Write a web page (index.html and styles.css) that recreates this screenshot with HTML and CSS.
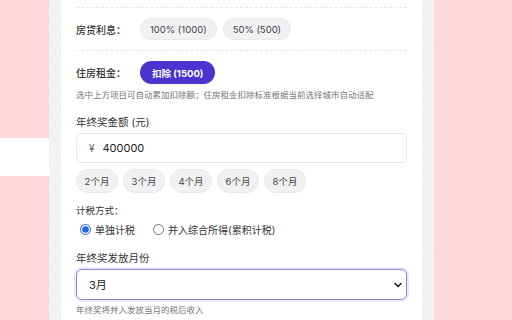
FILE: index.html
```html
<!DOCTYPE html>
<html lang="zh-CN">
<head>
  <meta charset="UTF-8">
  <meta name="viewport" content="width=device-width, initial-scale=1.0">
  <title>年终奖计算器</title>
  <link rel="stylesheet" href="styles.css">
</head>
<body>
  <div class="side">
    <div class="side-block"></div>
  </div>
  <div class="panel">
    <div class="card">
      <div class="deduct-row">
        <span class="row-label">房贷利息：</span>
        <div class="chips">
          <button class="chip">100% (1000)</button>
          <button class="chip">50% (500)</button>
        </div>
      </div>
      <div class="deduct-row">
        <span class="row-label">住房租金：</span>
        <div class="chips">
          <button class="chip active">扣除 (1500)</button>
        </div>
      </div>
      <p class="hint">选中上方项目可自动累加扣除额；住房租金扣除标准根据当前选择城市自动适配</p>

      <div class="field bonus-field">
        <label class="field-label" for="bonus">年终奖金额 (元)</label>
        <div class="money-input">
          <span class="currency">¥</span>
          <input type="text" id="bonus" value="400000">
        </div>
        <div class="chips months">
          <button class="chip">2个月</button>
          <button class="chip">3个月</button>
          <button class="chip">4个月</button>
          <button class="chip">6个月</button>
          <button class="chip">8个月</button>
        </div>
      </div>

      <div class="field">
        <span class="small-label">计税方式：</span>
        <div class="radios">
          <label class="radio"><input type="radio" name="mode" checked> 单独计税</label>
          <label class="radio"><input type="radio" name="mode"> 并入综合所得(累积计税)</label>
        </div>
      </div>

      <div class="field month-field">
        <label class="field-label" for="month">年终奖发放月份</label>
        <div class="select-wrap">
          <select id="month">
            <option>1月</option>
            <option>2月</option>
            <option selected>3月</option>
            <option>4月</option>
          </select>
          <svg class="chevron" width="10" height="10" viewBox="0 0 10 10"><path d="M2 3.5 L5 6.5 L8 3.5" fill="none" stroke="#222" stroke-width="1.6" stroke-linecap="round" stroke-linejoin="round"/></svg>
        </div>
        <p class="hint">年终奖将并入发放当月的税后收入</p>
      </div>
    </div>
  </div>
</body>
</html>
```

FILE: styles.css
```css
/* 年终奖计算页面 */
* {
  box-sizing: border-box;
}

html, body {
  height: 100%;
}

body {
  margin: 0;
  display: flex;
  overflow: hidden;
  background-color: #fdd9de;
  background-image: radial-gradient(#f9cdd4 0.6px, transparent 0.6px);
  background-size: 4px 4px;
  font-family: "Inter", "Noto Sans CJK SC", sans-serif;
  color: #2b2b2b;
}

.side {
  width: 49px;
  padding-top: 138px;
}

.side-block {
  height: 38px;
  background-color: #fff;
}

.panel {
  width: 385px;
  padding: 0 12px;
  background-color: #f4f4f4;
  background-image: repeating-linear-gradient(45deg, #eeeeee 0 1px, transparent 1px 3px);
}

.card {
  height: 100%;
  background-color: #fff;
  padding: 7px 15px 0;
}

.deduct-row {
  display: flex;
  align-items: center;
  border-top: 1px dashed #e6e6e6;
  padding: 10px 0;
}

.deduct-row + .deduct-row {
  padding-bottom: 4px;
}

.row-label {
  width: 64px;
  font-size: 10px;
  font-weight: 500;
  color: #333;
}

.chips {
  display: flex;
  gap: 6px;
}

.chip {
  height: 22px;
  padding: 0 9px;
  border: 1px solid #e9e9ec;
  border-radius: 11px;
  background-color: #f1f1f3;
  font-family: inherit;
  font-size: 9.5px;
  color: #444;
  cursor: pointer;
}

.chip.active {
  height: 23px;
  padding: 0 11px;
  border-color: #4a33cf;
  background-color: #4a33cf;
  color: #fff;
  font-weight: 700;
}

.hint {
  margin: 0;
  font-size: 8.5px;
  color: #777;
}

.field {
  margin-top: 10px;
}

.bonus-field {
  margin-top: 14px;
}

.field-label {
  display: block;
  font-size: 10.5px;
  color: #333;
  margin-bottom: 4px;
}

.money-input {
  display: flex;
  align-items: center;
  height: 30px;
  border: 1px solid #e8e8e8;
  border-radius: 6px;
  padding: 0 12px;
}

.currency {
  font-size: 10px;
  color: #666;
  margin-right: 8px;
}

.money-input input {
  border: none;
  outline: none;
  flex: 1;
  font-family: inherit;
  font-size: 11px;
  color: #222;
  padding: 0;
}

.months {
  margin-top: 6px;
  gap: 5px;
}

.months .chip {
  width: 42px;
  height: 24px;
  padding: 0;
  border-radius: 12px;
}

.small-label {
  display: block;
  font-size: 9.5px;
  color: #333;
}

.radios {
  display: flex;
  gap: 14px;
  margin-top: 5px;
}

.radio {
  display: flex;
  align-items: center;
  gap: 4px;
  font-size: 10px;
  color: #333;
}

.radio input {
  width: 11px;
  height: 11px;
  margin: 0 0 0 4px;
  accent-color: #2563eb;
}

.month-field {
  margin-top: 13px;
}

.select-wrap {
  position: relative;
}

.select-wrap select {
  width: 100%;
  height: 31px;
  appearance: none;
  border: 1.5px solid #8f84d9;
  border-radius: 6px;
  box-shadow: 0 0 0 2px #ece9fb;
  background-color: #fff;
  padding: 0 12px;
  font-family: inherit;
  font-size: 11px;
  color: #222;
  outline: none;
}

.chevron {
  position: absolute;
  right: 4px;
  top: 11px;
}

.select-wrap + .hint {
  margin-top: 3px;
}
```
